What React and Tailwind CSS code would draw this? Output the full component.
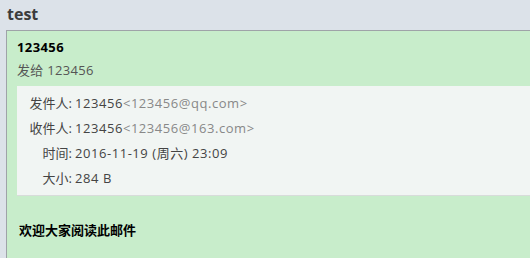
import React from "react";

const rows = [
  { label: "发件人:", name: "123456", mail: "<123456@qq.com>" },
  { label: "收件人:", name: "123456", mail: "<123456@163.com>" },
  { label: "时间:", name: "2016-11-19 (周六) 23:09" },
  { label: "大小:", name: "284 B" },
];

function App() {
  return (
    <div
      className="w-[530px] h-[258px] overflow-hidden bg-[#dce2e9] flex flex-col"
      style={{ fontFamily: '"Open Sans", "Noto Sans CJK SC", sans-serif' }}>
      <div className="h-[30px] pl-[7px] pt-[2px] text-[16px] font-bold text-[#3c3c3c] leading-[24px]">
        test
      </div>

      <div className="ml-[6px] flex-1 border-t border-l border-[#9fa3a8] bg-[#c8edcb] pt-[5px]">
        <div className="pl-[10px] text-[13px] font-bold text-black leading-[22px] tracking-[0.4px]">
          123456
        </div>
        <div className="pl-[10px] mt-[1px] text-[13px] text-[#555] leading-[22px] tracking-[0.3px]">
          发给 123456
        </div>

        <div className="ml-[10px] mt-[5px] h-[110px] bg-[#f1f5f3] border-b border-[#d8dcda] pt-[5px] flex flex-col">
          {rows.map((row) => (
            <div key={row.label} className="flex h-[25px] items-center text-[13px] text-[#444] tracking-[0.55px]">
              <span className="w-[55px] text-right tracking-normal">{row.label}</span>
              <span className="ml-[3px]">{row.name}</span>
              {row.mail && <span className="text-[#888]">{row.mail}</span>}
            </div>
          ))}
        </div>

        <div className="pl-[12px] mt-[24px] text-[13px] font-bold text-black leading-[20px]">
          欢迎大家阅读此邮件
        </div>
      </div>
    </div>
  );
}

export default App;
